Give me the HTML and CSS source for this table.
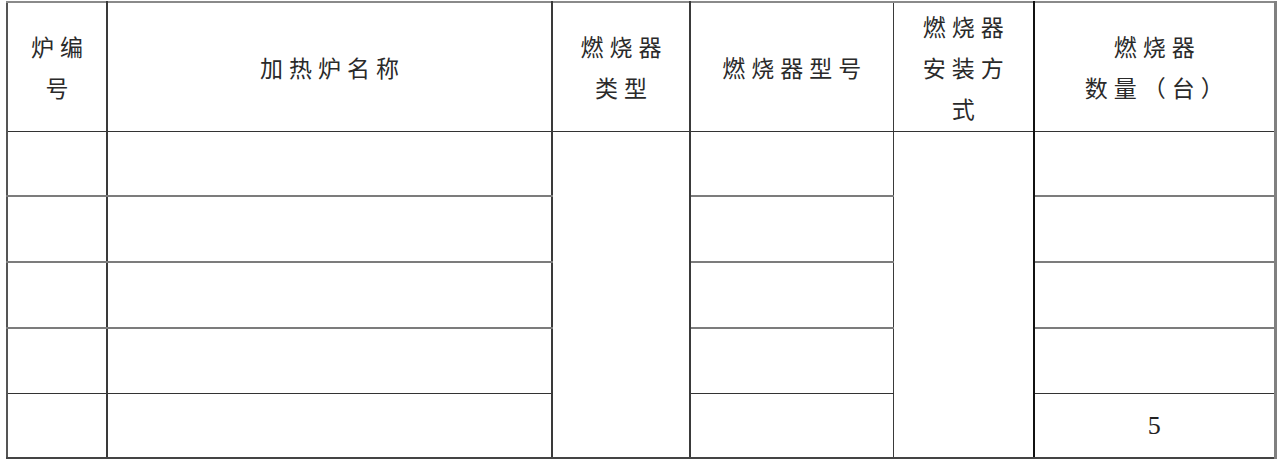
FILE: index.html
```html
<!DOCTYPE html>
<html lang="zh">
<head>
<meta charset="utf-8">
<title>加热炉燃烧器</title>
<link rel="stylesheet" href="styles.css">
</head>
<body>
<table class="grid">
  <colgroup>
    <col class="c1"><col class="c2"><col class="c3"><col class="c4"><col class="c5"><col class="c6">
  </colgroup>
  <thead>
    <tr class="head">
      <th class="k1">炉编<br>号</th>
      <th class="k2">加热炉名称</th>
      <th class="k3">燃烧器<br>类型</th>
      <th class="k4">燃烧器型号</th>
      <th class="k5">燃烧器<br>安装方<br>式</th>
      <th class="k6">燃烧器<br>数量（台）</th>
    </tr>
  </thead>
  <tbody>
    <tr class="row r1">
      <td class="k1"></td><td class="k2"></td><td class="k3 span" rowspan="5"></td><td class="k4"></td><td class="k5 span" rowspan="5"></td><td class="k6"></td>
    </tr>
    <tr class="row r2">
      <td class="k1"></td><td class="k2"></td><td class="k4"></td><td class="k6"></td>
    </tr>
    <tr class="row r3">
      <td class="k1"></td><td class="k2"></td><td class="k4"></td><td class="k6"></td>
    </tr>
    <tr class="row r4">
      <td class="k1"></td><td class="k2"></td><td class="k4"></td><td class="k6"></td>
    </tr>
    <tr class="row r5">
      <td class="k1"></td><td class="k2"></td><td class="k4"></td><td class="k6 num">5</td>
    </tr>
  </tbody>
</table>
</body>
</html>
```

FILE: styles.css
```css
html, body {
  margin: 0;
  padding: 0;
  background: #ffffff;
}

body {
  padding: 1px 0 0 6px;
}

.grid {
  border-collapse: collapse;
  table-layout: fixed;
  width: 1270px;
  font-family: "Noto Sans CJK SC", "Noto Sans", sans-serif;
  color: #2a2a2a;
  border-top: 2px solid #8a8a8a;
  border-left: 2px solid #555555;
  border-right: 3px solid #808080;
  border-bottom: 2px solid #444444;
}

.c1 { width: 100px; }
.c2 { width: 445px; }
.c3 { width: 138px; }
.c4 { width: 203px; }
.c5 { width: 141px; }
.c6 { width: 241px; }

.head th {
  height: 128px;
  padding: 0 0 0 6px;
  font-weight: 400;
  font-size: 23px;
  line-height: 41px;
  letter-spacing: 6px;
  text-align: center;
  vertical-align: middle;
  border-bottom: 1px solid #333333;
  border-right: 2px solid #3a3a3a;
}

.head th.k4 { border-right-width: 1px; }
.head th.k5 { border-right: 2px solid #111111; }
.head th.k6 { border-right: 3px solid #808080; }

.row td {
  height: 64px;
  padding: 0;
  border-right: 2px solid #3a3a3a;
  border-bottom: 2px solid #7c7c7c;
}

.r1 td, .r5 td { height: 63px; }

.row td.k4 { border-right-width: 1px; }
.row td.k5 { border-right: 2px solid #111111; }
.row td.k6 { border-right: 3px solid #808080; }

.r4 td { border-bottom: 1px solid #333333; }
.r5 td { border-bottom: 2px solid #444444; }
.row td.span { border-bottom: 2px solid #444444; }

.num {
  font-family: "Liberation Serif", serif;
  font-size: 26px;
  text-align: center;
  vertical-align: middle;
  color: #222222;
  padding-top: 2px;
}
```
